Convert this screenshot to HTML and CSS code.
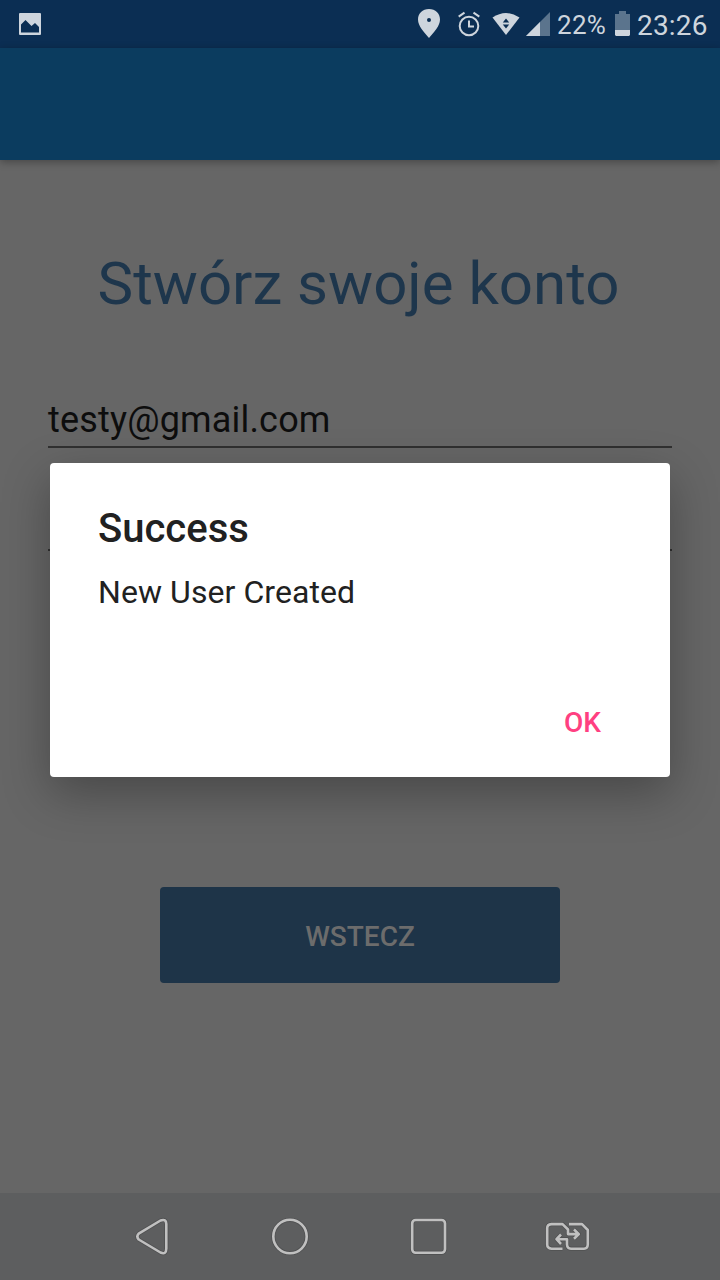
FILE: index.html
```html
<!DOCTYPE html>
<html lang="pl">
<head>
<meta charset="utf-8">
<title>Stwórz swoje konto</title>
<link rel="stylesheet" href="styles.css">
</head>
<body>
<div class="screen">
  <header class="status-bar">
    <svg class="icon-picture" width="24" height="24" viewBox="0 0 24 24"><path fill="#ced5dd" fill-rule="evenodd" d="M2 1H22Q23 1 23 2V22Q23 23 22 23H2Q1 23 1 22V2Q1 1 2 1ZM3 20.500H21V15L17 11L13.500 14L7.500 8L3 12.500Z"/></svg>
    <div class="status-group">
      <svg class="icon-pin" width="24" height="30" viewBox="0 0 24 30"><path fill="#ced5dd" fill-rule="evenodd" d="M12 1C5.500 1 1 5.500 1 11.500C1 18 7 24 12 30C17 24 23 18 23 11.500C23 5.500 18.500 1 12 1ZM12 10A2 2 0 1 1 12 14A2 2 0 1 1 12 10Z"/></svg>
      <svg class="icon-alarm" width="24" height="26" viewBox="0 0 24 26"><g fill="none" stroke="#ced5dd" stroke-width="2"><circle cx="12" cy="15" r="9.300"/><path d="M1.700 5.600L7.500 1.700M16.500 1.700L22.300 5.600M12 9.500V15.500H17"/></g></svg>
      <svg class="icon-wifi" width="28" height="24" viewBox="0 0 28 24"><path fill="#ced5dd" d="M.5 5.500Q14-3.500 27.500 5.500L14 23Z"/><path fill="#0b2e53" d="M14 6.500L17.200 10.500H10.800ZM10.800 12.500H17.200L14 16.500Z"/></svg>
      <svg class="icon-signal" width="24" height="24" viewBox="0 0 24 24"><path fill="#5b748d" d="M0 24L24 0V24Z"/><path fill="#ced5dd" d="M0 24L14 10V24Z"/></svg>
      <span class="battery-level">22%</span>
      <svg class="icon-battery" width="15" height="25" viewBox="0 0 15 25"><path fill="#5b748d" d="M4 0H11V3H15V19H0V3H4Z"/><path fill="#ced5dd" d="M0 19H15V24L14 25H1L0 24Z"/></svg>
      <time class="clock">23:26</time>
    </div>
  </header>
  <div class="app-bar"></div>
  <main class="content">
    <h1 class="title">Stwórz swoje konto</h1>
    <div class="field">testy@gmail.com</div>
    <div class="field field-password"></div>
    <button class="back-button">WSTECZ</button>
  </main>
  <nav class="nav-bar">
    <svg class="nav-icons" width="720" height="87" viewBox="0 0 720 87">
      <g class="nav-halo"><use href="#nav-shapes"/></g>
      <g class="nav-lines"><g id="nav-shapes">
        <path d="M138.700 40.600L160.500 27.500Q166.300 25.500 166.300 31V55.500Q166.300 62 160.500 59.500L138.700 46.500Q136 43.600 138.700 40.600Z"/>
        <circle cx="290" cy="43.500" r="16.700"/>
        <rect x="412.200" y="27" width="32.800" height="32.800" rx="3.500"/>
        <path d="M562.500 55.700H551.500Q547.200 55.200 547.200 51.500V35Q547.200 31.600 551.500 31.100H562.500L568 36.500V41.100H577.500M574 36.500L578.800 41.100L574 45.800M569 31.100H582L587.800 37V51.500Q587.600 55.500 584 55.700H571Q567.200 55.500 567 51.500V46.200H557.500M561 41.500L556.500 46.200L561 51"/>
      </g></g>
    </svg>
  </nav>
  <section class="dialog" role="alertdialog" aria-labelledby="dialog-title">
    <h2 class="dialog-title" id="dialog-title">Success</h2>
    <p class="dialog-message">New User Created</p>
    <button class="dialog-action">OK</button>
  </section>
</div>
</body>
</html>
```

FILE: styles.css
```css
* { box-sizing: border-box; }
body { margin: 0; }
.screen {
  position: relative;
  display: flex;
  flex-direction: column;
  width: 720px;
  height: 1280px;
  overflow: hidden;
  background: #666;
  font-family: Roboto, "Liberation Sans", sans-serif;
}
svg { display: block; flex: none; }
button { border: 0; font: 500 28px/34px Roboto, "Liberation Sans", sans-serif; }
.status-bar {
  display: flex;
  justify-content: space-between;
  height: 48px;
  padding: 0 12px 0 18px;
  background: #0b2e53;
  color: #ced5dd;
}
.icon-picture { margin-top: 12px; }
.status-group { display: flex; align-items: flex-start; }
.icon-pin { margin: 8px 16px 0 0; }
.icon-alarm { margin: 11px 11px 0 0; }
.icon-wifi { margin: 12px 6px 0 0; }
.icon-signal { margin: 12px 7px 0 0; }
.battery-level { width: 58px; padding-top: 10px; font-size: 26px; line-height: 31px; letter-spacing: .3px; }
.icon-battery { margin: 11px 7px 0 0; }
.clock { width: 71px; padding-top: 10px; font-size: 28px; line-height: 32px; letter-spacing: .2px; white-space: nowrap; }
.app-bar {
  flex: none;
  height: 112px;
  background: #0b3c5f;
  box-shadow: 0 2px 8px rgba(0, 0, 0, .32);
}
.content {
  display: flex;
  flex: 1;
  flex-direction: column;
  padding: 89px 48px 0;
}
.title {
  margin: 0 3px 80px 0;
  color: #1e364c;
  font-size: 60px;
  font-weight: 400;
  line-height: 70px;
  text-align: center;
  white-space: nowrap;
}
.field {
  height: 49px;
  border-bottom: 2px solid #303030;
  color: #0d0d0d;
  font-size: 36px;
  line-height: 42px;
  letter-spacing: .18px;
}
.field-password { height: 103px; }
.back-button {
  align-self: center;
  width: 400px;
  height: 96px;
  margin-top: 336px;
  padding: 3px 0 0;
  border-radius: 4px;
  background: #1e3448;
  color: #6c6c6c;
}
.nav-bar { height: 87px; background: #5d5e5f; }
.nav-icons { fill: none; stroke-linejoin: round; }
.nav-halo { stroke: #505152; stroke-width: 4.2; }
.nav-lines { stroke: #c0c0c0; stroke-width: 2.6; }
.dialog {
  position: absolute;
  top: 463px;
  left: 50px;
  display: flex;
  flex-direction: column;
  width: 620px;
  height: 314px;
  padding: 42px 48px 0;
  border-radius: 4px;
  background: #fff;
  color: #212121;
  box-shadow: 0 16px 48px rgba(0, 0, 0, .3);
}
.dialog-title { margin: 0; font-size: 40px; font-weight: 500; line-height: 47px; }
.dialog-message { margin: 21px 0 0; font-size: 32px; line-height: 38px; letter-spacing: .07px; }
.dialog-action {
  align-self: flex-end;
  margin: 95px 21px 0 0;
  padding: 0;
  background: none;
  color: #ff4081;
}
```
